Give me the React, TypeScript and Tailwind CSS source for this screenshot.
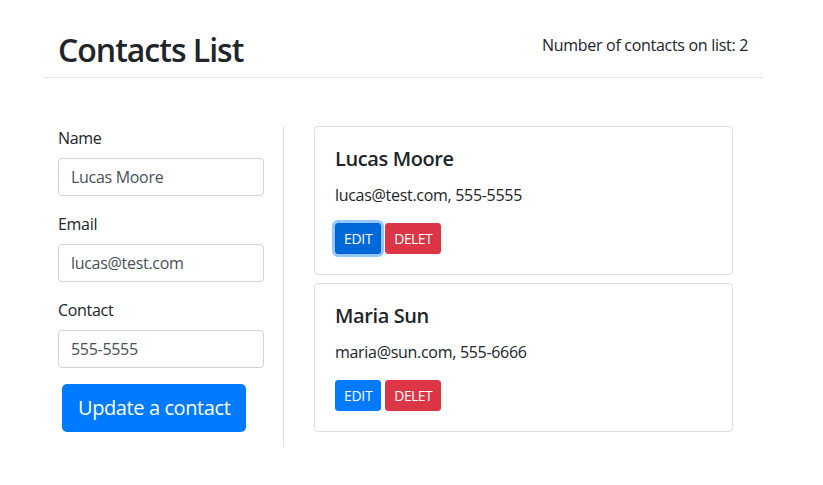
import { useState } from 'react';

type Contact = { id: number; name: string; email: string; phone: string };

const initialContacts: Contact[] = [
  { id: 1, name: 'Lucas Moore', email: 'lucas@test.com', phone: '555-5555' },
  { id: 2, name: 'Maria Sun', email: 'maria@sun.com', phone: '555-6666' },
];

function Field({ label, value }: { label: string; value: string }) {
  return (
    <div className="mb-4">
      <label className="block mb-2 leading-6">{label}</label>
      <input
        readOnly
        value={value}
        className="block w-[206px] h-[38px] px-3 border border-[#ced4da] rounded text-[#495057] bg-white outline-none tracking-[-0.3px]"
      />
    </div>
  );
}

export default function App() {
  const [contacts] = useState<Contact[]>(initialContacts);
  const selected = contacts[0];

  return (
    <div
      className="min-h-[485px] bg-white text-[#212529] text-base tracking-[-0.3px]"
      style={{ fontFamily: '"Segoe UI", "Open Sans", sans-serif' }}
    >
      <div className="w-[720px] ml-[43px]">
        <div className="flex justify-between items-start px-[15px] pt-[31px] pb-[8px] border-b border-[#e5e5e5]">
          <h1 className="text-[32px] leading-[38px] font-semibold tracking-[-1px]">Contacts List</h1>
          <p className="mt-[2px] leading-6">Number of contacts on list: {contacts.length}</p>
        </div>

        <div className="flex mt-[48px]">
          <div className="w-[241px] pl-[15px] pb-[15px] border-r border-[#dee2e6]">
            <Field label="Name" value={selected.name} />
            <Field label="Email" value={selected.email} />
            <Field label="Contact" value={selected.phone} />
            <button className="ml-1 h-12 px-4 rounded-[5px] bg-[#007bff] text-white text-xl leading-[30px] tracking-[-0.4px]">
              Update a contact
            </button>
          </div>

          <div className="flex-1 px-[30px] flex flex-col gap-2">
            {contacts.map((c, i) => (
              <div key={c.id} className="border border-[#dfdfdf] rounded p-5">
                <h5 className="text-xl leading-6 font-semibold mb-3 tracking-[-0.4px]">{c.name}</h5>
                <p className="leading-6 mb-4">
                  {c.email}, {c.phone}
                </p>
                <div className="flex gap-1">
                  <button
                    className={
                      i === 0
                        ? 'h-[31px] px-2 rounded-[3px] text-sm text-white bg-[#0069d9] border border-[#0062cc] shadow-[0_0_0_3px_rgba(38,143,255,0.5)]'
                        : 'h-[31px] px-2 rounded-[3px] text-sm text-white bg-[#007bff] border border-[#007bff]'
                    }
                  >
                    EDIT
                  </button>
                  <button className="h-[31px] px-2 rounded-[3px] text-sm text-white bg-[#dc3545] border border-[#dc3545] tracking-[-0.6px]">
                    DELET
                  </button>
                </div>
              </div>
            ))}
          </div>
        </div>
      </div>
    </div>
  );
}
